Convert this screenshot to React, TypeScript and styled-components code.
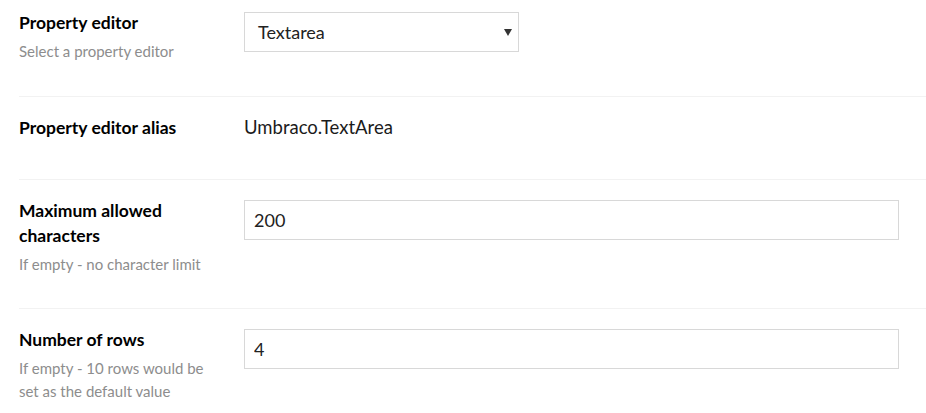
import { FC } from "react";
import styled, { createGlobalStyle } from "styled-components";

const GlobalStyle = createGlobalStyle`
  html, body {
    margin: 0;
    padding: 0;
    background: #fff;
  }
  body {
    font-family: Lato, "Open Sans", sans-serif;
    color: #000;
  }
`;

const Panel = styled.div`
  width: 926px;
  padding-left: 19px;
  box-sizing: border-box;
  overflow: hidden;
  height: 413px;
`;

const Row = styled.div<{ $first?: boolean; $min: number }>`
  display: grid;
  grid-template-columns: 225px 655px;
  align-items: start;
  padding: ${(p) => (p.$first ? "12px" : "20px")} 0 0;
  min-height: ${(p) => p.$min}px;
  box-sizing: border-box;
  border-bottom: 1px solid #f2f2f2;
`;

const LabelCol = styled.div`
  padding-right: 18px;
`;

const Title = styled.div`
  font-size: 17.5px;
  font-weight: 700;
  line-height: 25px;
  margin-top: -2px;
`;

const Description = styled.div`
  font-size: 15px;
  line-height: 23px;
  color: #8d8d8d;
  margin-top: 5px;
`;

const Control = styled.div`
  display: flex;
`;

const SelectBox = styled.div`
  position: relative;
  width: 275px;
  height: 40px;
  box-sizing: border-box;
  border: 1px solid #d8d8d8;
  display: flex;
  align-items: center;
  padding-left: 13px;
  font-size: 18px;
  color: #222;
`;

const Caret = styled.span`
  position: absolute;
  right: 6px;
  top: 16px;
  width: 0;
  height: 0;
  border-left: 4px solid transparent;
  border-right: 4px solid transparent;
  border-top: 7px solid #333;
`;

const TextInput = styled.input`
  width: 655px;
  height: 40px;
  box-sizing: border-box;
  border: 1px solid #d8d8d8;
  border-radius: 0;
  padding: 0 9px;
  font-family: Lato, "Open Sans", sans-serif;
  font-size: 18px;
  color: #222;
  outline: none;
`;

const ReadOnly = styled.div`
  font-size: 18.5px;
  line-height: 24px;
  color: #1b1b1b;
  margin-top: -2px;
`;

type Field = {
  title: string;
  description?: string;
  height: number;
  render: () => JSX.Element;
};

const fields: Field[] = [
  {
    title: "Property editor",
    description: "Select a property editor",
    height: 97,
    render: () => (
      <SelectBox>
        Textarea
        <Caret />
      </SelectBox>
    ),
  },
  {
    title: "Property editor alias",
    height: 83,
    render: () => <ReadOnly>Umbraco.TextArea</ReadOnly>,
  },
  {
    title: "Maximum allowed characters",
    description: "If empty - no character limit",
    height: 129,
    render: () => <TextInput defaultValue="200" />,
  },
  {
    title: "Number of rows",
    description: "If empty - 10 rows would be set as the default value",
    height: 129,
    render: () => <TextInput defaultValue="4" />,
  },
];

const App: FC = () => {
  return (
    <>
      <GlobalStyle />
      <Panel>
        {fields.map((f, i) => (
          <Row key={f.title} $first={i === 0} $min={f.height}>
            <LabelCol>
              <Title>{f.title}</Title>
              {f.description && <Description>{f.description}</Description>}
            </LabelCol>
            <Control>{f.render()}</Control>
          </Row>
        ))}
      </Panel>
    </>
  );
};

export default App;
